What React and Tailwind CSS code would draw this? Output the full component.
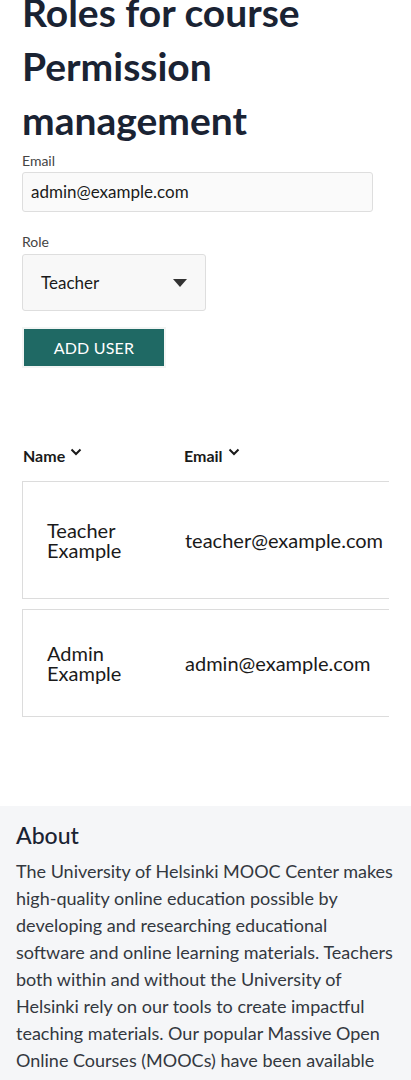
import React from "react";

const Chevron = () => (
  <svg width="12" height="8" viewBox="0 0 12 8" className="ml-[5px] -mt-[8px]">
    <path d="M1.5 1.5 L6 6 L10.5 1.5" fill="none" stroke="#1a1a1a" strokeWidth="2" />
  </svg>
);

const users = [
  { first: "Teacher", last: "Example", email: "teacher@example.com", h: "h-[118px]" },
  { first: "Admin", last: "Example", email: "admin@example.com", h: "h-[108px]" },
];

export default function App() {
  return (
    <div className="w-[411px] bg-white font-['Lato',sans-serif] text-[#1a1a1a]">
      <main className="px-[22px]">
        <h1 className="font-['Lato',sans-serif] font-bold text-[39px] leading-[54px] text-[#1a2333] -mt-[15px]">
          Roles for course
          <br />
          Permission management
        </h1>

        <label className="block text-[14px] text-[#444] mt-[6px] leading-[16px]">Email</label>
        <div className="mt-[3px] w-[351px] h-[40px] bg-[#fafafa] border border-[#dedede] rounded-[3px] flex items-center px-[8px] text-[17px] text-[#1a1a1a]">
          admin@example.com
        </div>

        <label className="block text-[14px] text-[#444] mt-[22px] leading-[16px]">Role</label>
        <div className="mt-[4px] w-[184px] h-[57px] bg-[#f8f8f8] border border-[#dedede] rounded-[3px] flex items-center justify-between pl-[18px] pr-[18px] text-[17px]">
          <span>Teacher</span>
          <svg width="14" height="8" viewBox="0 0 14 8">
            <path d="M0 0 L14 0 L7 8 Z" fill="#333" />
          </svg>
        </div>

        <div className="mt-[16px] inline-block p-[2px] bg-[#f3f5f4]">
          <button className="w-[140px] h-[37px] bg-[#1f6964] text-white text-[16px] tracking-[0.2px] flex items-center justify-center">
            ADD USER
          </button>
        </div>

        <div className="mt-[76px] w-[367px] overflow-hidden">
          <div className="flex items-center h-[24px] font-bold text-[16px]">
            <div className="w-[162px] pl-[1px] flex items-center">
              Name <Chevron />
            </div>
            <div className="flex items-center">
              Email <Chevron />
            </div>
          </div>
          <div className="mt-[13px] flex flex-col gap-[10px]">
            {users.map((u) => (
              <div key={u.email} className={`w-[420px] ${u.h} border border-[#dcdcdc] flex items-center`}>
                <div className="w-[162px] pl-[24px] text-[20px] leading-[20px]">
                  {u.first}
                  <br />
                  {u.last}
                </div>
                <div className="text-[20px]">{u.email}</div>
              </div>
            ))}
          </div>
        </div>
      </main>

      <footer className="mt-[89px] bg-[#f5f6f8] px-[16px] pt-[14px] pb-[40px]">
        <h2 className="text-[23px] font-medium text-[#1a2333] leading-[30px]">About</h2>
        <p className="mt-[8px] text-[18px] leading-[27px] text-[#333840]">
          The University of Helsinki MOOC Center makes high-quality online education possible by developing and
          researching educational software and online learning materials. Teachers both within and without the
          University of Helsinki rely on our tools to create impactful teaching materials. Our popular Massive Open
          Online Courses (MOOCs) have been available through the platform for years.
        </p>
      </footer>
    </div>
  );
}
